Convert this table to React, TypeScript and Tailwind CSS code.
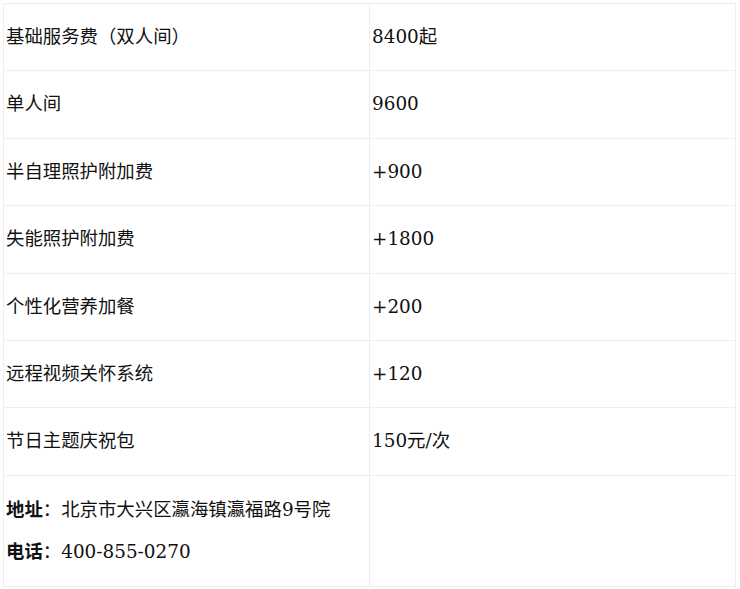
import React from 'react'

const rows: [string, string][] = [
    ['基础服务费（双人间）', '8400起'],
    ['单人间', '9600'],
    ['半自理照护附加费', '+900'],
    ['失能照护附加费', '+1800'],
    ['个性化营养加餐', '+200'],
    ['远程视频关怀系统', '+120'],
    ['节日主题庆祝包', '150元/次'],
]

export default function App() {
    return (
        <div className="bg-white p-[3px] font-['DejaVu_Serif','Noto_Sans_CJK_SC',serif] text-[18.4px] text-[#111]">
            <table className="w-[733px] border-collapse">
                <tbody>
                    {rows.map(([label, price]) => (
                        <tr key={label}>
                            <td className="w-1/2 border border-[#eeeeee] px-[2px] py-[20px] leading-[26.4px]">{label}</td>
                            <td className="w-1/2 border border-[#eeeeee] px-[2px] py-[20px] leading-[26.4px]">{price}</td>
                        </tr>
                    ))}
                    <tr>
                        <td className="border border-[#eeeeee] px-[2px] py-[20px]">
                            <div className="flex flex-col gap-[14px] leading-[28px]">
                                <p><strong>地址</strong>：北京市大兴区瀛海镇瀛福路9号院</p>
                                <p><strong>电话</strong>：400-855-0270</p>
                            </div>
                        </td>
                        <td className="border border-[#eeeeee] px-[2px] py-[20px]"></td>
                    </tr>
                </tbody>
            </table>
        </div>
    )
}
